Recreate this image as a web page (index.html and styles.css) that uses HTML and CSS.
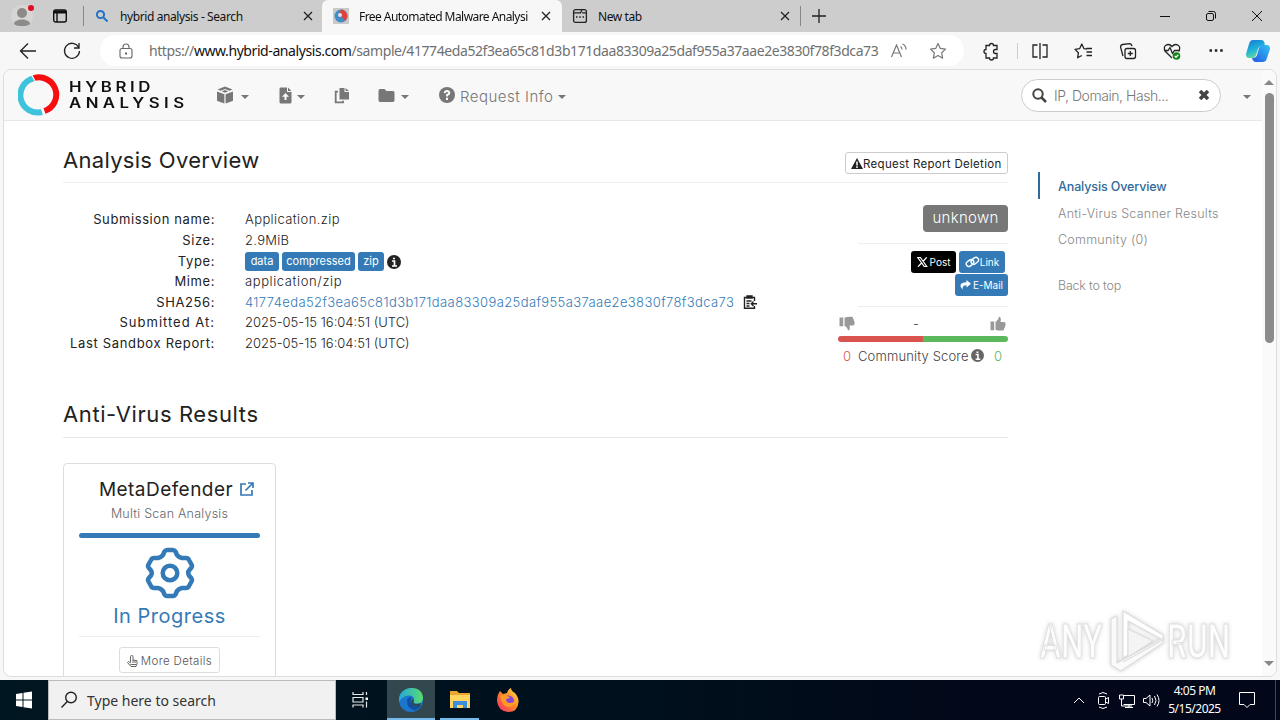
FILE: index.html
```html
<!DOCTYPE html>
<html lang="en">
<head>
<meta charset="utf-8">
<title>Free Automated Malware Analysis Service</title>
<link rel="stylesheet" href="styles.css">
</head>
<body>
<div class="tabs">
  <div class="tab-tools">
    <svg class="avatar" width="24" height="24" viewBox="0 0 24 24"><circle cx="12" cy="12" r="11" fill="#d8d6d4"/><circle cx="12" cy="9" r="5" fill="#8d8b89"/><path d="M4 20c0-6 16-6 16 0-3 3-13 3-16 0z" fill="#8d8b89"/><circle cx="21" cy="4" r="3" fill="#e00b1c"/></svg>
    <svg width="16" height="16" viewBox="0 0 16 16" fill="none" stroke="#111" stroke-width="1.4"><rect x="1.7" y="2" width="12.6" height="12" rx="2"/><path d="M2 4h12" stroke-width="3"/><path d="M5 4v10"/></svg>
  </div>
  <div class="tab tab-first">
    <svg width="16" height="16" viewBox="0 0 16 16" fill="none" stroke="#2573c4" stroke-width="2"><circle cx="6.5" cy="6.5" r="3.6"/><path d="M9.5 9.5l4 4"/></svg>
    <span class="tab-title t-search">hybrid analysis - Search</span>
    <svg class="close" width="10" height="10" viewBox="0 0 10 10"><path d="M1 1l8 8M9 1l-8 8"/></svg>
  </div>
  <div class="tab active">
    <svg width="16" height="16" viewBox="0 0 16 16"><path fill="#c9c9c9" d="M0 0h16v16H0z"/><circle cx="8" cy="8" r="6.5" fill="#3f8fc6"/><path d="M8 1.5a6.5 6.5 0 0 1 4 11.4L9 9 5 8z" fill="#e0423b"/><circle cx="7" cy="7" r="2" fill="#cfe8f6"/></svg>
    <span class="tab-title t-free">Free Automated Malware Analysi</span>
    <svg class="close" width="10" height="10" viewBox="0 0 10 10"><path d="M1 1l8 8M9 1l-8 8"/></svg>
  </div>
  <div class="tab tab-new">
    <svg width="16" height="16" viewBox="0 0 16 16" fill="none" stroke="#222" stroke-width="1.3"><rect x="1.6" y="1.6" width="12.8" height="12.8" rx="2"/><path d="M2 4.8h6.500l1.500-3M10 4.800h4M4 9h1.500M7.300 9h1.500M10.500 9H12"/></svg>
    <span class="tab-title t-new">New tab</span>
    <svg class="close" width="10" height="10" viewBox="0 0 10 10"><path d="M1 1l8 8M9 1l-8 8"/></svg>
  </div>
  <svg class="plus" width="14" height="14" viewBox="0 0 14 14"><path d="M7 0v14M0 7h14"/></svg>
  <div class="win-controls">
    <svg width="46" height="32" viewBox="0 0 46 32"><path d="M18 16.500h10"/></svg>
    <svg width="46" height="32" viewBox="0 0 46 32"><rect x="18.500" y="13.500" width="7" height="7" rx="1.500"/><path d="M20.500 11.500h5a2 2 0 0 1 2 2v5"/></svg>
    <svg width="46" height="32" viewBox="0 0 46 32"><path d="M18 11l10 10M28 11L18 21"/></svg>
  </div>
</div>

<div class="toolbar">
  <svg class="tool" width="44" height="38" viewBox="0 0 44 38"><path d="M30 19H14.500M22 11.500L14.500 19l7.500 7.500"/></svg>
  <svg class="tool" width="44" height="38" viewBox="0 0 44 38"><path d="M28.500 15a7.500 7.500 0 1 0 1 4M29 11v5h-5"/></svg>
  <div class="url-bar">
    <svg class="lock" width="14" height="16" viewBox="0 0 14 16" fill="none" stroke="#666" stroke-width="1.100"><rect x="1" y="5.500" width="12" height="9.500" rx="2"/><path d="M4 5.500V4a3 3 0 0 1 6 0v1.500"/><path d="M6 10.500h2" stroke-width="2"/></svg>
    <span class="url">https://<b>www.hybrid-analysis.com</b>/sample/41774eda52f3ea65c81d3b171daa83309a25daf955a37aae2e3830f78f3dca73</span>
    <svg class="read" width="18" height="18" viewBox="0 0 18 18" fill="none" stroke="#777" stroke-width="1.200"><path d="M1.500 15L6.500 3l5 12M3.500 11h6M10.500 4.500q1.500 1 1.500 3M12.500 2q3.500 1.500 3.500 5.500"/></svg>
    <svg class="star" width="18" height="18" viewBox="0 0 18 18" fill="none" stroke="#777" stroke-width="1.200" stroke-linejoin="round"><path d="M9 1.500l2.300 4.900 5.200.7-3.800 3.700.9 5.400L9 13.600l-4.600 2.600.9-5.400L1.500 7.100l5.200-.7z"/></svg>
  </div>
  <svg class="tool ext" width="44" height="38" viewBox="0 0 44 38"><path d="M17 13.500h3.500a2 2 0 0 1 4 0H28v4h-1.500a2 2 0 0 0 0 4H28v4.500h-3.500a2 2 0 0 1-4 0H17v-4.500a2 2 0 0 1 0-4z" stroke-width="1.300"/></svg>
  <div class="tool-sep"></div>
  <svg class="tool" width="44" height="38" viewBox="0 0 44 38"><path d="M19.500 13H15v12h4.500M24.500 13H29v12h-4.500M22 11v16"/></svg>
  <svg class="tool" width="44" height="38" viewBox="0 0 44 38"><path d="M25 17l-3-.3-2.200-4.700-2.200 4.700-4.600.7 3.400 3.400-.8 5 4.200-2.300M24.500 16.500H30M24.500 20H30M24.500 23.500H30" stroke-linejoin="round"/></svg>
  <svg class="tool" width="44" height="38" viewBox="0 0 44 38"><rect x="19" y="16.500" width="10.500" height="10" rx="2"/><path d="M24.300 19v5M21.800 21.500h5M17 24l-2.500-9q0-2 2-2.500l7-.9q2 0 2.400 2.500"/></svg>
  <svg class="tool" width="44" height="38" viewBox="0 0 44 38"><path d="M22 26l-6.500-6.500c-4-6 3-9 6.500-5 3.500-4 10.500-1 6.500 5M14 18.500h4l2-3 2.500 6 2-3H30"/><circle cx="26.500" cy="24" r="3.800" fill="#138517" stroke="none"/><path d="M24.800 24l1.200 1.200 2.300-2.400" stroke="#fff"/></svg>
  <svg class="tool" width="44" height="38" viewBox="0 0 44 38"><path d="M15.500 18.500h2.500M20.800 18.500h2.500M26.200 18.500h2.500" stroke-width="2.300"/></svg>
  <svg class="copilot" width="26" height="26" viewBox="0 0 26 26"><defs><linearGradient id="cp1" x1="0" y1="0" x2=".4" y2="1"><stop offset="0" stop-color="#1377d5"/><stop offset=".6" stop-color="#20b4d8"/><stop offset="1" stop-color="#69d79a"/></linearGradient><linearGradient id="cp2" x1="0" y1="1" x2="1" y2="0"><stop offset="0" stop-color="#2457e4"/><stop offset="1" stop-color="#33c3f2"/></linearGradient></defs><path d="M8 2h8q3 0 3.500 3l.5 3h-3q-3 0-4 3l-2 6q-1 3-4 3H4q-3 0-3-4l3-10q1-4 4-4z" fill="url(#cp1)"/><path d="M19 7h3q3 0 3 4l-3 9q-1 4-4 4h-7q-3 0-4-4h1q3 0 4-3l2-7q1-3 5-3z" fill="url(#cp2)"/></svg>
</div>

<div class="viewport">
  <div class="page">
    <div class="navbar">
      <svg class="logo-mark" width="42" height="42" viewBox="0 0 42 42" fill="none" stroke-width="6"><path d="M15.500 4.300A17 17 0 0 1 26.500 37" stroke="#f60d0d"/><path d="M15.500 4.300A17 17 0 0 0 24 38" stroke="#3fc3dd"/><path d="M13 0l5 8.500M22.500 33l4 8.500" stroke="#f8f8f8" stroke-width="1.200"/></svg>
      <div class="logo-text"><span class="logo-a">HYBRID</span><span class="logo-b">ANALYSIS</span></div>
      <div class="nav-item n-box">
        <svg width="18" height="18" viewBox="0 0 18 18"><path d="M8.400 8.300v9.300L1.500 15Q1 14.800 1 14V5.500zM9.600 8.300v9.300l6.900-2.600q.5-.2.500-1V5.500zM9 .5l7.500 3-3 1.200L9 3 4.500 4.700l-3-1.200zM9 4.100l3.300 1.200L9 6.700 5.700 5.300z"/></svg><i class="caret"></i>
      </div>
      <div class="nav-item n-file">
        <svg width="13" height="17" viewBox="0 0 13 17"><path fill-rule="evenodd" d="M1.500.5H8V5h4.500v10q0 1.500-1.500 1.500H2Q.5 16.500.5 15V2q0-1.500 1-1.500zM9 .5L12.500 4H9zM6.500 6L3 9.700h2.500V13h2V9.700H10z"/></svg><i class="caret"></i>
      </div>
      <div class="nav-item n-copy">
        <svg width="16" height="17" viewBox="0 0 16 17"><path d="M5.500 1h5v4H15v7.500H5.500zM11.500 1L15 4h-3.500z"/><path d="M4 4.700H1.700v10.600H9v-1.600" fill="none" stroke="#777" stroke-width="1.800"/></svg>
      </div>
      <div class="nav-item n-folder">
        <svg width="17" height="15" viewBox="0 0 17 15"><path d="M2 1h4.500L8.500 3H15q1.500 0 1.500 1.500V12q0 2-1.500 2H2Q.5 14 .5 12V3Q.5 1 2 1z"/></svg><i class="caret"></i>
      </div>
      <div class="nav-item n-req">
        <svg width="16" height="16" viewBox="0 0 16 16"><circle cx="8" cy="8" r="8"/><path d="M5.700 6.200Q6 4 8 4t2.300 2Q10.300 7.200 8 8.200v1.300M8 10.700V13" fill="none" stroke="#fff" stroke-width="2"/></svg>
        <span class="req-label">Request Info</span><i class="caret"></i>
      </div>
      <div class="search">
        <svg width="15" height="15" viewBox="0 0 15 15" fill="none" stroke="#444" stroke-width="2"><circle cx="6" cy="6" r="4.700"/><path d="M9.500 9.500l4.500 4.500" stroke-width="2.500"/></svg>
        <span class="search-hint">IP, Domain, Hash...</span>
        <svg width="10" height="10" viewBox="0 0 10 10" fill="none" stroke="#444" stroke-width="3.600"><path d="M1 1l8 8M9 1L1 9"/></svg>
      </div>
      <i class="caret user-caret"></i>
    </div>

    <div class="content">
      <div class="main">
        <div class="heading">
          <h2 class="h-over">Analysis Overview</h2>
          <div class="btn btn-delete"><svg width="12" height="11" viewBox="0 0 12 11"><path d="M6 0l6 11H0z" fill="#222"/><path d="M6 3.500v4M6 8.300V10" stroke="#fff" stroke-width="1.500"/></svg><span>Request Report Deletion</span></div>
        </div>
        <div class="overview">
          <dl class="info">
            <dt class="k1">Submission name:</dt><dd class="v1">Application.zip</dd>
            <dt class="k2">Size:</dt><dd class="v2">2.9MiB</dd>
            <dt class="k3">Type:</dt><dd class="types"><span class="label l1">data</span><span class="label l2">compressed</span><span class="label l3">zip</span><svg width="14" height="14" viewBox="0 0 14 14"><circle cx="7" cy="7" r="7" fill="#222"/><path d="M5 6h2.500v5M5 11h5M6 3.500h2" fill="none" stroke="#fff" stroke-width="1.700"/></svg></dd>
            <dt class="k4">Mime:</dt><dd class="v4">application/zip</dd>
            <dt class="k5">SHA256:</dt><dd class="hash"><a>41774eda52f3ea65c81d3b171daa83309a25daf955a37aae2e3830f78f3dca73</a><svg width="14" height="14" viewBox="0 0 14 14" fill="none" stroke="#222" stroke-width="1.400"><path d="M11.500 6V2.500H1.500v10.800h10V11M4 2V1h5v2H4zM3.500 6h5M3.500 8.500h3M3.500 11h3M14 8.700H8.500M10.500 6.500L8.300 8.700l2.200 2.200"/></svg></dd>
            <dt class="k6">Submitted At:</dt><dd class="date">2025-05-15 16:04:51 (UTC)</dd>
            <dt class="k7">Last Sandbox Report:</dt><dd class="date">2025-05-15 16:04:51 (UTC)</dd>
          </dl>
          <div class="verdict">
            <div class="badge">unknown</div>
            <div class="share">
              <div class="share-btn post"><svg width="11" height="10" viewBox="0 0 11 10" fill="none" stroke="#fff"><path d="M.8.5h2.500l6.500 9H7.300zM9.700.3L6 4.500M4.600 6L1 9.700" stroke-width="1.200"/></svg>Post</div>
              <div class="share-btn link"><svg width="15" height="12" viewBox="0 0 15 12" fill="none" stroke="#fff" stroke-width="1.400"><rect x="-4" y="-2.600" width="8" height="5.200" rx="2.600" transform="translate(5 7) rotate(-38)"/><rect x="-4" y="-2.600" width="8" height="5.200" rx="2.600" transform="translate(9.800 4.800) rotate(-38)"/></svg>Link</div>
              <div class="share-btn mail"><svg width="11" height="10" viewBox="0 0 11 10"><path d="M6.500 0L11 3.800 6.500 7.500V5.300Q2.500 5 2.500 9.500 0 7.500.5 5 1.500 2.300 6.500 2.300z" fill="#fff"/></svg>E-Mail</div>
            </div>
            <div class="votes">
              <svg width="17" height="15" viewBox="0 0 17 15" fill="#999"><path d="M.5 1.500h3.700v8.800H.5zM5.500 1.800Q8 .5 13 .8q1.500.5 1 2 1.500.7.900 2.200 1.300.9.600 2.400.2 2-1.500 2h-3.500q1 4-.8 5-1.300 0-1.500-2.300Q7 10.500 5.500 9.800z"/></svg>
              <span>-</span>
              <svg width="17" height="15" viewBox="0 0 17 15" fill="#999"><path d="M.5 5.500h3.700v8.800H.5zM5.500 13.700q2.500 1.200 7.500.8 1.500-.5 1-2 1.500-.7.900-2.200 1.300-.9.600-2.400.2-2-1.500-2h-3.500q1-4-.8-5.200-1.300 0-1.500 2.300Q7 5 5.500 5.700z"/></svg>
            </div>
            <div class="score-bar"></div>
            <div class="score"><span class="red">0</span><span class="score-text">Community Score</span><svg width="13" height="13" viewBox="0 0 14 14"><circle cx="7" cy="7" r="7" fill="#666"/><path d="M5 6h2.500v5M5 11h5M6 3.500h2" fill="none" stroke="#fff" stroke-width="1.700"/></svg><span class="green">0</span></div>
          </div>
        </div>
        <div class="heading heading-av"><h2 class="h-av">Anti-Virus Results</h2></div>
        <div class="card">
          <div class="card-title"><span>MetaDefender</span><svg width="14" height="14" viewBox="0 0 14 14" fill="none" stroke="#337ab7" stroke-width="1.700"><path d="M6 2H1v11h11V8M8 1h5v5M13 1L5.500 8.500"/></svg></div>
          <div class="card-sub">Multi Scan Analysis</div>
          <div class="card-bar"></div>
          <svg class="gear" width="50" height="52" viewBox="-25 -26 50 52" fill="none" stroke="#337ab7" stroke-width="4.500" stroke-linejoin="round"><path d="M-7-18L-5.500-21.500Q-4.500-23-3-23H3Q4.500-23 5.500-21.500L7-18Q9-15.500 12-15L16-15Q18-15 19-13L21.500-8.500Q22.500-7 21.500-5.500L19-2.500Q17.500 0 19-2.500Q17.500 0 19 2.500L21.500 5.500Q22.500 7 21.500 8.500L19 13Q18 15 16 15L12 15Q9 15.500 7 18L5.500 21.500Q4.500 23 3 23H-3Q-4.500 23-5.500 21.500L-7 18Q-9 15.500-12 15L-16 15Q-18 15-19 13L-21.500 8.500Q-22.500 7-21.500 5.500L-19 2.500Q-17.500 0-19-2.500L-21.500-5.500Q-22.500-7-21.500-8.500L-19-13Q-18-15-16-15L-12-15Q-9-15.500-7-18z"/><circle r="7.300"/></svg>
          <div class="progress">In Progress</div>
          <div class="details"><svg width="11" height="12" viewBox="0 0 11 12" fill="none" stroke="#666"><path d="M3.500 7.500V1.700q0-1.200 1.300-1.200T6 1.700V5l4 .7v3L9 11.500H4L.5 7.500l1-1 2 1.500M6 5v3M8 5.500V8M3.500 9.500H9"/></svg><span>More Details</span></div>
        </div>
      </div>
      <div class="side">
        <a class="on">Analysis Overview</a>
        <a class="s2">Anti-Virus Scanner Results</a>
        <a class="s3">Community (0)</a>
        <a class="s4">Back to top</a>
      </div>
    </div>
  </div>
  <div class="scrollbar"><i class="up"></i><div class="thumb"></div><i class="down"></i></div>
  <div class="watermark">
    <span class="wm-any">ANY</span>
    <svg width="60" height="64" viewBox="0 0 60 64" fill="none" stroke="#dedede" stroke-width="1.200" stroke-linejoin="round"><path d="M16 2l40 24v5L21 12v34l-5 3z" fill="#fff"/><path d="M21 20v28l25-16z" fill="#f4f4f4"/><path d="M4 10l6-3v47l46-25v5L14 62 4 56z" fill="#fafafa"/><path d="M16 53L56 31"/></svg>
    <span class="wm-run">RUN</span>
  </div>
</div>

<div class="taskbar">
  <svg class="start" width="48" height="40" viewBox="0 0 48 40" fill="#fff"><path d="M16 14l6.500-1v6.500H16zM23.500 12.800L32 11.500v8h-8.500zM16 20.500h6.500V27L16 26zM23.500 20.500H32v8l-8.500-1.300z"/></svg>
  <div class="task-search">
    <svg width="18" height="18" viewBox="0 0 18 18" fill="none" stroke="#222" stroke-width="1.400"><circle cx="10" cy="6.500" r="5.300"/><path d="M6.300 10.500L.5 16.500"/></svg>
    <span>Type here to search</span>
  </div>
  <svg class="task" width="50" height="40" viewBox="0 0 50 40" fill="none" stroke="#e8e8e8" stroke-width="1.200"><path d="M17 12v2.500h10V12M17 27.500V25h10v2.500M17 17.500h10v4.500H17zM30.500 12v3M30.500 21.500v6"/><path d="M29.500 17.500h2.500v2.500h-2.500z" fill="#fff" stroke="none"/></svg>
  <div class="task-edge"><svg width="24" height="24" viewBox="0 0 24 24"><defs><linearGradient id="ed"><stop offset="0" stop-color="#25a9dc"/><stop offset="1" stop-color="#59dc6e"/></linearGradient></defs><circle cx="12" cy="12" r="12" fill="#1b76cf"/><path d="M0 11C1-3 24-4 24 10q0 6-7 5.500-3-.3-2-3 .5-5-5-5Q3 8 0 14z" fill="url(#ed)"/><path d="M8 13q0 8 8 9.500Q20 21 22.500 17 15 20 12 15q-1-4 1-6-5 0-5 4z" fill="#12519f"/><path d="M14.500 13q-1 2.500 2.500 3 3 .3 5-1.200L21 18q-7 1-9-3 0-3 2-4.500 1 1 .5 2.500z" fill="#33484e"/></svg></div>
  <div class="task-files"><svg width="22" height="20" viewBox="0 0 22 20"><path d="M1 1h7l2 2h11v15H1z" fill="#e9a632"/><path d="M1 5h20v13H1z" fill="#ffd55f"/><path d="M4 18v-7h14v7h-4v-3H8v3z" fill="#3b8fdd"/></svg></div>
  <svg class="firefox" width="24" height="26" viewBox="0 0 24 26"><defs><linearGradient id="ff" x1="1" y1="0" x2="0" y2="1"><stop offset="0" stop-color="#ffe94b"/><stop offset=".45" stop-color="#ff8a24"/><stop offset="1" stop-color="#f0286d"/></linearGradient></defs><path d="M4 4l3 3 4-1q1-4 4-5 0 3 4 5 4 5 3.500 9Q22 25 12 25 2 24 1 14 1 8 4 4z" fill="url(#ff)"/><circle cx="12.500" cy="14" r="5.500" fill="#8446d7"/><path d="M4 8q5-1 7 1l3 1q-1 2-4 2 0 4 4 4 3 0 5-2-1 6-7 6T4 8z" fill="#ff9a28"/></svg>
  <div class="tray">
    <svg width="26" height="40" viewBox="0 0 26 40"><path d="M8 23l5-5 5 5"/></svg>
    <svg width="22" height="40" viewBox="0 0 22 40"><rect x="6.500" y="16.500" width="7" height="8" rx="1"/><path d="M13.500 19l3-1.500v6l-3-1.500M7 14q4-3 8 0M7 27q4 3 8 0"/></svg>
    <svg width="26" height="40" viewBox="0 0 26 40"><path d="M9.500 15.500h11v9H9.500M5.500 15h4v4h-4zM7.500 19v7H18M15 24.500v3M11 27.500h8"/></svg>
    <svg width="24" height="40" viewBox="1 0 24 40"><path d="M4.500 18.500h2.500l4-3.500v11l-4-3.500H4.500zM13 18q1.500 2.500 0 5M15.500 16q3 4.500 0 9M18 14.500q4 6 0 12"/></svg>
    <div class="clock"><span class="c1">4:05 PM</span><span class="c2">5/15/2025</span></div>
    <svg width="50" height="40" viewBox="3 0 50 40"><path d="M17.500 12.500h15v12H28l-3 3-3-3h-4.500z"/></svg>
    <div class="peek"></div>
  </div>
</div>
</body>
</html>
```
FILE: styles.css
```css
* {
  box-sizing: border-box;
  margin: 0;
  padding: 0;
}

body {
  display: flex;
  flex-direction: column;
  width: 1280px;
  height: 720px;
  overflow: hidden;
  background: #f7f7f7;
  font-family: "Noto Sans", sans-serif;
  font-size: 12px;
  color: #222;
  white-space: nowrap;
}

svg {
  display: block;
  flex: none;
}

/* browser tabs */
.tabs {
  display: flex;
  align-items: center;
  height: 32px;
  background: #cdcdcd;
  flex: none;
}
.tab-tools {
  display: flex;
  align-items: center;
  gap: 18px;
  width: 84px;
  height: 20px;
  padding-left: 10px;
  border-right: 1px solid #888;
}
.tab {
  display: flex;
  align-items: center;
  height: 32px;
  padding-left: 10px;
  color: #111;
}
.tab-first {
  width: 238px;
  padding-right: 9px;
}
.tab.active {
  width: 240px;
  padding: 0 11px;
  background: #f7f7f7;
  border-radius: 6px 6px 0 0;
}
.tab-new {
  width: 239px;
  height: 20px;
  padding-right: 10px;
  border-right: 1px solid #888;
}
.tab-title {
  flex: 1;
  margin-left: 10px;
}
.t-search {
  letter-spacing: -0.4px;
}
.t-free {
  letter-spacing: -0.55px;
  -webkit-mask-image: linear-gradient(90deg, #000 92%, transparent 99%);
}
.t-new {
  letter-spacing: -0.4px;
}
.close, .plus {
  fill: none;
  stroke: #222;
  stroke-width: 1.3;
}
.tab-new + .plus {
  margin-left: 11px;
}
.win-controls {
  display: flex;
  margin-left: auto;
  fill: none;
  stroke: #111;
}

/* address bar */
.toolbar {
  display: flex;
  align-items: center;
  height: 37px;
  padding-left: 6px;
  flex: none;
}
.tool {
  fill: none;
  stroke: #222;
  stroke-width: 1.3;
}
.url-bar {
  display: flex;
  align-items: center;
  width: 864px;
  height: 31px;
  margin-left: 6px;
  padding-left: 19px;
  border-radius: 16px;
  background: #fff;
}
.url {
  width: 731px;
  margin-left: 16px;
  font-size: 14px;
  letter-spacing: -.42px;
  color: #707070;
}
.url b {
  font-weight: normal;
  color: #111;
}
.read {
  margin-left: 10px;
}
.star {
  margin-left: 21px;
}
.ext {
  margin-left: 5px;
}
.tool-sep {
  width: 1px;
  height: 16px;
  margin-left: 4px;
  background: #ccc;
}
.copilot {
  margin-left: 7px;
}

/* page area */
.viewport {
  position: relative;
  display: flex;
  height: 608px;
  margin: 0 3px;
  border: 1px solid #ddd;
  border-radius: 8px;
  overflow: hidden;
  background: #fff;
  flex: none;
}
.page {
  width: 1258px;
  font-family: Inter, "Open Sans", sans-serif;
  font-weight: 300;
}
.navbar {
  display: flex;
  align-items: center;
  height: 51px;
  padding-left: 14px;
  background: #f8f8f8;
  border-bottom: 1px solid #e7e7e7;
}
.logo-text {
  display: flex;
  flex-direction: column;
  width: 118px;
  margin-left: 9px;
  font-size: 14px;
  font-weight: 600;
  line-height: 16px;
  color: #111;
  transform: scaleX(1.2);
  transform-origin: 0 0;
}
.logo-a {
  letter-spacing: 3px;
}
.logo-b {
  letter-spacing: 3.7px;
}
.nav-item {
  display: flex;
  align-items: center;
  fill: #777;
}
.caret {
  margin-left: 7px;
  border: 4px solid transparent;
  border-top-color: #777;
  border-bottom: 0;
}
.nav-item .caret {
  margin-top: 4px;
}
.n-box {
  margin-left: 29px;
}
.n-file {
  margin-left: 30px;
}
.n-file .caret {
  margin-left: 5px;
}
.n-copy {
  margin-left: 29px;
}
.n-folder {
  margin-left: 28px;
}
.n-folder .caret {
  margin-left: 6px;
}
.n-req {
  margin-left: 30px;
}
.req-label {
  margin: 2px 0 0 5px;
  font-size: 15px;
  letter-spacing: .5px;
  color: #777;
}
.n-req .caret {
  margin-left: 5px;
}
.search {
  display: flex;
  align-items: center;
  width: 200px;
  height: 33px;
  margin-left: auto;
  padding: 0 11px 0 10px;
  border: 1px solid #ccc;
  border-radius: 17px;
  background: #fff;
}
.search-hint {
  flex: 1;
  margin: 1px 0 0 7px;
  font-size: 14px;
  letter-spacing: -.45px;
  color: #777;
}
.user-caret {
  margin: 3px 11px 0 22px;
}

.content {
  display: flex;
  padding: 20px 0 0 59px;
}
.main {
  width: 945px;
}
.heading {
  display: flex;
  align-items: center;
  justify-content: space-between;
  height: 42px;
  border-bottom: 1px solid #eee;
}
h2 {
  padding-bottom: 4px;
  font-size: 22px;
  font-weight: 400;
}
.h-over {
  letter-spacing: .3px;
}
.h-av {
  letter-spacing: .6px;
}
.btn-delete {
  display: flex;
  align-items: center;
  width: 163px;
  height: 22px;
  margin-top: 3px;
  padding: 1px 0 0 5px;
  border: 1px solid #ccc;
  border-radius: 3px;
  font-size: 11.5px;
  font-weight: 400;
  letter-spacing: .3px;
}
.overview {
  display: flex;
  justify-content: space-between;
  height: 212px;
}
.info {
  display: grid;
  grid-template-columns: 152px auto;
  grid-auto-rows: 20.6px;
  column-gap: 30px;
  align-content: start;
  align-items: center;
  padding-top: 26px;
  font-size: 13px;
}
.info dt {
  text-align: right;
  font-weight: 400;
  letter-spacing: .6px;
}
.info dd {
  display: flex;
  align-items: center;
}
.info .k6 {
  letter-spacing: 1px;
}
.info .k7 {
  letter-spacing: .68px;
}
.v1 {
  letter-spacing: .4px;
}
.v2 {
  letter-spacing: .3px;
}
.v4 {
  letter-spacing: .6px;
}
.types {
  gap: 3px;
  padding-top: 3px;
}
.k3 {
  padding-top: 1px;
}
.label {
  height: 19px;
  border-radius: 3px;
  background: #337ab7;
  color: #fff;
  font-size: 11px;
  line-height: 18px;
  font-weight: 400;
  text-align: center;
}
.l1 { width: 34px; }
.l2 { width: 73px; }
.l3 { width: 26px; }
.hash {
  gap: 9px;
  color: #337ab7;
}
.hash a {
  letter-spacing: .39px;
}
.verdict {
  width: 170px;
  padding-top: 22px;
}
.badge {
  width: 85px;
  height: 27px;
  margin-left: auto;
  border-radius: 4px;
  background: #777;
  color: #fff;
  font-size: 15px;
  line-height: 25px;
  letter-spacing: .3px;
  text-align: center;
}
.share {
  display: flex;
  flex-wrap: wrap;
  justify-content: flex-end;
  align-content: flex-start;
  gap: 1px 3px;
  width: 150px;
  height: 64px;
  margin: 11px 0 0 20px;
  padding-top: 7px;
  border-top: 1px solid #eee;
  border-bottom: 1px solid #eee;
}
.share-btn {
  display: flex;
  align-items: center;
  justify-content: center;
  gap: 2px;
  height: 22px;
  border-radius: 3px;
  background: #337ab7;
  color: #fff;
  font-size: 10px;
  font-weight: 400;
}
.post {
  width: 45px;
  background: #000;
}
.link {
  width: 46px;
  margin-right: 3px;
  gap: 0;
}
.mail {
  width: 53px;
}
.votes {
  display: flex;
  align-items: center;
  justify-content: space-between;
  height: 29px;
  padding: 3px 1px 0;
  font-size: 12px;
}
.votes span {
  margin-right: 14px;
}
.score-bar {
  height: 6px;
  border-radius: 3px;
  background: linear-gradient(90deg, #d9534f 50%, #5cb85c 50%);
}
.score {
  display: flex;
  align-items: center;
  height: 27px;
  padding-left: 5px;
  font-size: 13px;
  color: #444;
}
.red {
  width: 15px;
  color: #d9534f;
}
.score-text {
  width: 113px;
  letter-spacing: .15px;
}
.green {
  margin-left: 10px;
  color: #5cb85c;
}
.heading-av {
  height: 43px;
  border-bottom-color: #e8e8e8;
}

.card {
  display: flex;
  flex-direction: column;
  align-items: center;
  width: 213px;
  height: 240px;
  margin-top: 25px;
  padding: 11px 15px 0;
  border: 1px solid #ddd;
  border-radius: 4px;
}
.card-title {
  display: flex;
  align-items: center;
  gap: 7px;
  height: 28px;
  margin-left: 14px;
  font-size: 19px;
  font-weight: 400;
  letter-spacing: .45px;
}
.card-sub {
  height: 20px;
  margin-top: 1px;
  font-size: 12.5px;
  line-height: 20px;
  letter-spacing: .22px;
  color: #666;
}
.card-bar {
  width: 181px;
  height: 5px;
  margin-top: 9px;
  border-radius: 3px;
  background: #337ab7;
}
.gear {
  margin-top: 9px;
}
.progress {
  width: 181px;
  height: 38px;
  border-bottom: 1px solid #eee;
  font-size: 20px;
  line-height: 34px;
  font-weight: 400;
  letter-spacing: .5px;
  text-align: center;
  color: #337ab7;
}
.details {
  display: flex;
  align-items: center;
  justify-content: center;
  gap: 3px;
  width: 101px;
  height: 26px;
  margin-top: 10px;
  padding-top: 1px;
  border: 1px solid #ddd;
  border-radius: 3px;
  font-size: 11.5px;
  letter-spacing: .35px;
  color: #555;
}

.side {
  margin-left: 30px;
  padding-top: 31px;
  font-size: 12.5px;
  color: #888;
}
.side a {
  display: block;
  height: 27px;
  padding-left: 20px;
  line-height: 29px;
}
.side .on {
  padding-left: 18px;
  border-left: 2px solid #2f6a9a;
  font-weight: 500;
  letter-spacing: -.12px;
  color: #2f6a9a;
}
.side .s2 {
  letter-spacing: .24px;
}
.side .s3 {
  line-height: 27px;
  letter-spacing: .25px;
}
.side .s4 {
  margin-top: 18px;
  letter-spacing: -.2px;
}

.scrollbar {
  display: flex;
  flex-direction: column;
  align-items: center;
  width: 14px;
  padding: 10px 0 10px;
  background: #fafafa;
}
.up, .down {
  border: 5px solid transparent;
}
.up {
  border-top: 0;
  border-bottom-color: #888;
}
.down {
  margin-top: auto;
  border-bottom: 0;
  border-top-color: #888;
}
.thumb {
  width: 9px;
  height: 250px;
  margin-top: 8px;
  border-radius: 5px;
  background: #8b8b8b;
}

.watermark {
  position: absolute;
  right: 34px;
  bottom: 2px;
  display: flex;
  align-items: center;
  width: 202px;
  height: 66px;
  font-family: Roboto, sans-serif;
  font-size: 48px;
  font-weight: 500;
  color: #fdfdfd;
  -webkit-text-stroke: 1px #e0e0e0;
  filter: drop-shadow(0 0 2px #d2d2d2);
}
.watermark span {
  width: 67px;
  transform: scaleX(.66);
  transform-origin: 0 50%;
}

/* windows taskbar */
.taskbar {
  display: flex;
  height: 40px;
  margin-top: 3px;
  background: linear-gradient(90deg, #001620, #00101c 50%, #020719 80%);
  flex: none;
}
.task-search {
  display: flex;
  align-items: center;
  gap: 8px;
  width: 288px;
  padding-left: 12px;
  border: 1px solid #bbb;
  background: #f1f1f1;
  font-size: 14px;
  color: #333;
}
.task-search span {
  letter-spacing: 0;
}
.task-edge {
  display: flex;
  justify-content: center;
  width: 48px;
  margin-left: 1px;
  padding-top: 8px;
  background: #33484e;
  border-bottom: 2px solid #76b9ed;
}
.task-files {
  display: flex;
  justify-content: center;
  width: 39px;
  margin-left: 5px;
  padding-top: 10px;
  border-bottom: 2px solid #76b9ed;
}
.firefox {
  margin: 7px 0 0 17px;
}
.tray {
  display: flex;
  margin-left: auto;
  fill: none;
  stroke: #fff;
}
.clock {
  display: flex;
  flex-direction: column;
  align-items: center;
  width: 61px;
  padding-top: 2px;
  color: #fff;
  line-height: 18px;
}
.c1, .c2 {
  letter-spacing: -.5px;
}
.peek {
  width: 5px;
  border-left: 1px solid #445;
}
```
